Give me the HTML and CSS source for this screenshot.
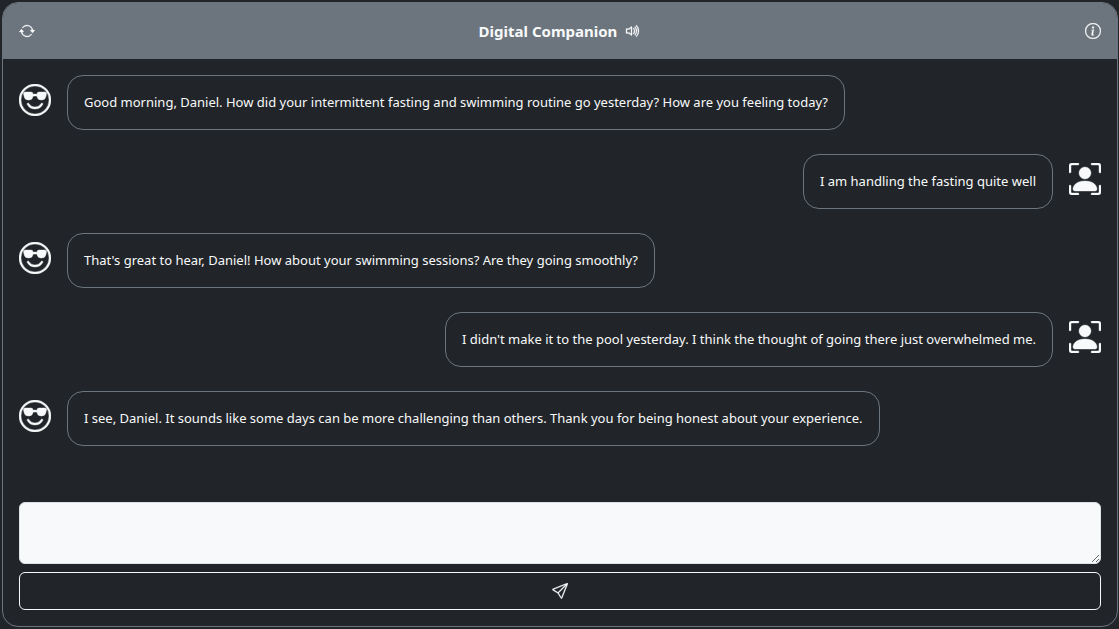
FILE: index.html
```html
<!DOCTYPE html>
<html lang="en">
<head>
<meta charset="utf-8">
<meta name="viewport" content="width=device-width, initial-scale=1">
<title>Digital Companion</title>
<link rel="stylesheet" href="styles.css">
</head>
<body>
<svg class="sprite" aria-hidden="true">
  <symbol id="cool" viewBox="0 0 16 16"><path d="M4.968 9.75a.5.5 0 1 0-.866.5A4.5 4.5 0 0 0 8 12.5a4.5 4.5 0 0 0 3.898-2.25.5.5 0 1 0-.866-.5A3.5 3.5 0 0 1 8 11.5a3.5 3.5 0 0 1-3.032-1.75M7 5.116V5a1 1 0 0 0-1-1H3.28a1 1 0 0 0-.97 1.243l.311 1.242A2 2 0 0 0 4.561 8H5a2 2 0 0 0 1.994-1.839A3 3 0 0 1 8 6c.393 0 .74.064 1.006.161A2 2 0 0 0 11 8h.438a2 2 0 0 0 1.94-1.515l.311-1.242A1 1 0 0 0 12.72 4H10a1 1 0 0 0-1 1v.116A4.2 4.2 0 0 0 8 5c-.35 0-.69.04-1 .116"/><path d="M16 8A8 8 0 1 1 0 8a8 8 0 0 1 16 0m-1 0A7 7 0 1 0 1 8a7 7 0 0 0 14 0"/></symbol>
  <symbol id="person" viewBox="0 0 16 16"><path d="M1.5 1a.5.5 0 0 0-.5.5v3a.5.5 0 0 1-1 0v-3A1.5 1.5 0 0 1 1.5 0h3a.5.5 0 0 1 0 1zM11 .5a.5.5 0 0 1 .5-.5h3A1.5 1.5 0 0 1 16 1.5v3a.5.5 0 0 1-1 0v-3a.5.5 0 0 0-.5-.5h-3a.5.5 0 0 1-.5-.5M.5 11a.5.5 0 0 1 .5.5v3a.5.5 0 0 0 .5.5h3a.5.5 0 0 1 0 1h-3A1.5 1.5 0 0 1 0 14.5v-3a.5.5 0 0 1 .5-.5m15 0a.5.5 0 0 1 .5.5v3a1.5 1.5 0 0 1-1.5 1.5h-3a.5.5 0 0 1 0-1h3a.5.5 0 0 0 .5-.5v-3a.5.5 0 0 1 .5-.5"/><path d="M3 14s-1 0-1-1 1-4 6-4 6 3 6 4-1 1-1 1zm8-9a3 3 0 1 1-6 0 3 3 0 0 1 6 0"/></symbol>
</svg>
<main class="card">
  <header class="card-header">
    <button class="icon-button" type="button" aria-label="Restart conversation">
      <svg class="icon" viewBox="0 0 16 16"><path d="M11.534 7h3.932a.25.25 0 0 1 .192.41l-1.966 2.36a.25.25 0 0 1-.384 0l-1.966-2.36a.25.25 0 0 1 .192-.41m-11 2h3.932a.25.25 0 0 0 .192-.41L2.692 6.23a.25.25 0 0 0-.384 0L.342 8.59A.25.25 0 0 0 .534 9"/><path d="M8 3c-1.552 0-2.94.707-3.857 1.818a.5.5 0 1 1-.771-.636A6.002 6.002 0 0 1 13.917 7H12.9A5 5 0 0 0 8 3M3.1 9a5.002 5.002 0 0 0 8.757 2.182.5.5 0 1 1 .771.636A6.002 6.002 0 0 1 2.083 9z"/></svg>
    </button>
    <div class="title-group">
      <h1 class="title">Digital Companion</h1>
      <button class="icon-button" type="button" aria-label="Toggle sound">
        <svg class="icon" viewBox="0 0 16 16"><path d="M11.536 14.01A8.47 8.47 0 0 0 14.026 8a8.47 8.47 0 0 0-2.49-6.01l-.708.707A7.48 7.48 0 0 1 13.025 8c0 2.071-.84 3.946-2.197 5.303z"/><path d="M10.121 12.596A6.48 6.48 0 0 0 12.025 8a6.48 6.48 0 0 0-1.904-4.596l-.707.707A5.48 5.48 0 0 1 11.025 8a5.48 5.48 0 0 1-1.61 3.89z"/><path d="M10.025 8a4.5 4.5 0 0 1-1.318 3.182L8 10.475A3.5 3.5 0 0 0 9.025 8c0-.966-.392-1.841-1.025-2.475l.707-.707A4.5 4.5 0 0 1 10.025 8M7 4a.5.5 0 0 0-.812-.39L3.825 5.5H1.5A.5.5 0 0 0 1 6v4a.5.5 0 0 0 .5.5h2.325l2.363 1.89A.5.5 0 0 0 7 12zM4.312 6.39 6 5.04v5.92L4.312 9.61A.5.5 0 0 0 4 9.5H2v-3h2a.5.5 0 0 0 .312-.11"/></svg>
      </button>
    </div>
    <button class="icon-button" type="button" aria-label="About">
      <svg class="icon" viewBox="0 0 16 16"><path d="M8 15A7 7 0 1 1 8 1a7 7 0 0 1 0 14m0 1A8 8 0 1 0 8 0a8 8 0 0 0 0 16"/><path d="m8.93 6.588-2.29.287-.082.38.45.083c.294.07.352.176.288.469l-.738 3.468c-.194.897.105 1.319.808 1.319.545 0 1.178-.252 1.465-.598l.088-.416c-.2.176-.492.246-.686.246-.275 0-.375-.193-.304-.533zM9 4.5a1 1 0 1 1-2 0 1 1 0 0 1 2 0"/></svg>
    </button>
  </header>
  <section class="messages" aria-label="Conversation">
    <article class="message">
      <svg class="avatar" aria-hidden="true"><use href="#cool"/></svg>
      <p class="bubble">Good morning, Daniel. How did your intermittent fasting and swimming routine go yesterday? How are you feeling today?</p>
    </article>
    <article class="message message-user">
      <p class="bubble">I am handling the fasting quite well</p>
      <svg class="avatar" aria-hidden="true"><use href="#person"/></svg>
    </article>
    <article class="message">
      <svg class="avatar" aria-hidden="true"><use href="#cool"/></svg>
      <p class="bubble">That's great to hear, Daniel! How about your swimming sessions? Are they going smoothly?</p>
    </article>
    <article class="message message-user">
      <p class="bubble">I didn't make it to the pool yesterday. I think the thought of going there just overwhelmed me.</p>
      <svg class="avatar" aria-hidden="true"><use href="#person"/></svg>
    </article>
    <article class="message">
      <svg class="avatar" aria-hidden="true"><use href="#cool"/></svg>
      <p class="bubble">I see, Daniel. It sounds like some days can be more challenging than others. Thank you for being honest about your experience.</p>
    </article>
  </section>
  <form class="composer">
    <textarea class="composer-input" rows="2" aria-label="Message"></textarea>
    <button class="send-button" type="button" aria-label="Send">
      <svg class="icon" viewBox="0 0 16 16"><path d="M15.854.146a.5.5 0 0 1 .11.54l-5.819 14.547a.75.75 0 0 1-1.329.124l-3.178-4.995L.643 7.184a.75.75 0 0 1 .124-1.33L15.314.037a.5.5 0 0 1 .54.11ZM6.636 10.07l2.761 4.338L14.13 2.576zm6.787-8.201L1.591 6.602l4.339 2.76z"/></svg>
    </button>
  </form>
</main>
</body>
</html>
```
FILE: styles.css
```css
* {
  box-sizing: border-box;
}

body {
  margin: 0;
  padding: 2px 1px 2px 2px;
  background: #212529;
  color: #f8f9fa;
  font-family: "Segoe UI", "Noto Sans", sans-serif;
  font-size: 13px;
  line-height: 21px;
}

.sprite {
  display: none;
}

.card {
  border: 1px solid #6c757d;
  border-radius: 16px;
  overflow: hidden;
}

.card-header {
  display: flex;
  align-items: center;
  justify-content: space-between;
  padding: 16px;
  background: #6c757d;
}

.title-group {
  display: flex;
  align-items: center;
  gap: 8px;
}

.title {
  margin: 0;
  font-size: 15px;
  font-weight: 700;
  line-height: 24px;
}

.icon-button {
  display: flex;
  padding: 0;
  border: 0;
  background: none;
  color: inherit;
  cursor: pointer;
}

.icon {
  width: 16px;
  height: 16px;
  fill: currentColor;
  stroke: currentColor;
  stroke-width: 0.3;
}

.messages {
  display: flex;
  flex-direction: column;
  gap: 24px;
  padding: 16px 16px 40px;
}

.message {
  display: flex;
  align-items: flex-start;
  gap: 16px;
}

.message-user {
  justify-content: flex-end;
}

.avatar {
  flex: none;
  width: 32px;
  height: 32px;
  margin-top: 9px;
  fill: currentColor;
  stroke: currentColor;
  stroke-width: 0.2;
  overflow: visible;
}

.bubble {
  margin: 0;
  padding: 16px;
  border: 1px solid #6c757d;
  border-radius: 16px;
}

.composer {
  display: flex;
  flex-direction: column;
  gap: 8px;
  padding: 16px;
}

.composer-input {
  display: block;
  width: 100%;
  padding: 6px 12px;
  border: 1px solid #dee2e6;
  border-radius: 6px;
  background: #f8f9fa;
  color: #212529;
  font: inherit;
  font-size: 16px;
  line-height: 24px;
  resize: vertical;
}

.send-button {
  display: flex;
  align-items: center;
  justify-content: center;
  height: 38px;
  border: 1px solid #f8f9fa;
  border-radius: 6px;
  background: none;
  color: inherit;
  cursor: pointer;
}
```
